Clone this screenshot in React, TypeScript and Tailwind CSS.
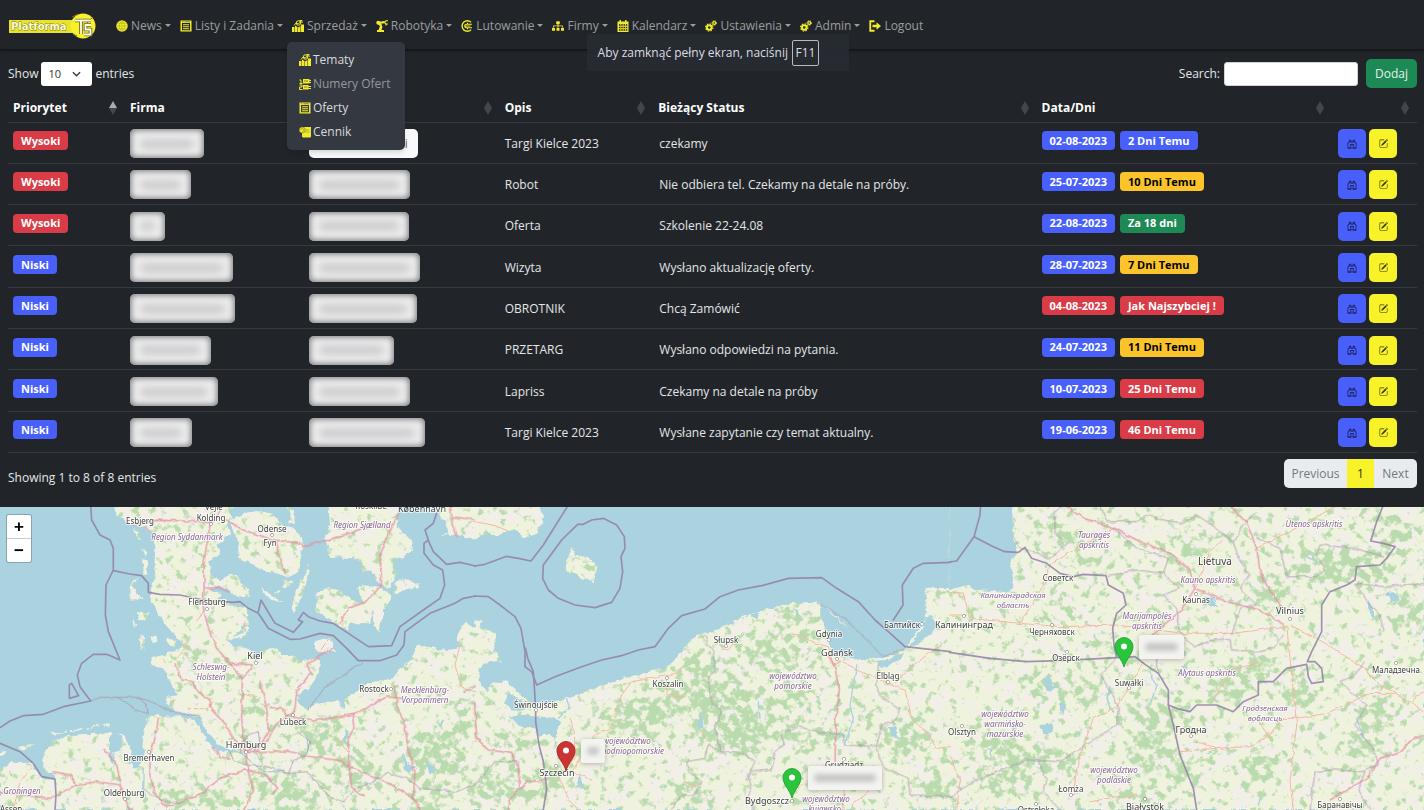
import type { ReactNode } from "react";
import { BsBinoculars, BsPencilSquare } from "react-icons/bs";
import { FaSitemap } from "react-icons/fa";

/* ---------- icons ---------- */

type IconProps = { className?: string };

function NewsIcon({ className }: IconProps) {
  return (
    <svg viewBox="0 0 24 24" className={className} aria-hidden="true">
      <circle cx="12" cy="12" r="11.500" fill="currentColor" />
      <path d="M12 1v22M1 12h22M3 6.500h18M3 17.500h18M12 1c-7 6-7 16 0 22M12 1c7 6 7 16 0 22" fill="none" stroke="#a9a426" strokeWidth="1" />
    </svg>
  );
}

function ListIcon({ className }: IconProps) {
  return (
    <svg viewBox="0 0 24 24" className={className} aria-hidden="true">
      <path fill="currentColor" fillRule="evenodd" d="M1 1h22v22H1zM4 6v14.500h16V6z" />
      <path stroke="currentColor" strokeWidth="2.200" d="M6 9.500h12M6 13.500h12M6 17.500h12" />
      <path stroke="#212529" strokeWidth="1" d="M4 3.500h3M9 3.500h11" />
    </svg>
  );
}

function SalesIcon({ className }: IconProps) {
  return (
    <svg viewBox="0 0 24 24" className={className} aria-hidden="true">
      <path fill="currentColor" d="M0 14h5v10H0zM6 11l5 3v10H6zM12 15l5-3v12h-5zM18 9h6v15h-6z" />
      <circle cx="13" cy="6" r="4.500" fill="none" stroke="currentColor" strokeWidth="2" />
      <path d="M4 11l4-5 5 2 6-7M15 1h5v5" fill="none" stroke="currentColor" strokeWidth="2" />
    </svg>
  );
}

function RobotIcon({ className }: IconProps) {
  return (
    <svg viewBox="0 0 24 24" className={className} aria-hidden="true">
      <path fill="currentColor" d="M2 24v-4h3l3-8-4-3.500h5l4 5L11 20h5v4z" />
      <circle cx="4.500" cy="5.500" r="4" fill="currentColor" />
      <path d="M5 5.500l6 6" stroke="currentColor" strokeWidth="4" />
      <path fill="currentColor" d="M6 3.500L17 2v4.500L6 8z" />
      <path d="M24 1.500h-4l-3 3 3 3.500v3M20 8h4" fill="none" stroke="currentColor" strokeWidth="2.400" />
    </svg>
  );
}

function CalendarIcon({ className }: IconProps) {
  return (
    <svg viewBox="0 0 24 24" className={className} aria-hidden="true">
      <path fill="currentColor" d="M5 0h3v3h8V0h3v3h4v21H1V3h4z" />
      <path fill="#212529" d="M4 8.500h3v3H4zM8.500 8.500h3v3h-3zM13 8.500h3v3h-3zM17.500 8.500h3v3h-3zM4 13.500h3v3H4zM8.500 13.500h3v3h-3zM13 13.500h3v3h-3zM17.500 13.500h3v3h-3zM4 18.500h3v3H4zM8.500 18.500h3v3h-3zM13 18.500h3v3h-3zM17.500 18.500h3v3h-3z" />
    </svg>
  );
}

function GearsIcon({ className }: IconProps) {
  return (
    <svg viewBox="0 0 24 24" className={className} aria-hidden="true">
      <circle cx="8.500" cy="15" r="4.600" fill="none" stroke="currentColor" strokeWidth="4" />
      <circle cx="8.500" cy="15" r="7.300" fill="none" stroke="currentColor" strokeWidth="2.400" strokeDasharray="3 2.730" />
      <circle cx="18.500" cy="6" r="2.800" fill="none" stroke="currentColor" strokeWidth="2.600" />
      <circle cx="18.500" cy="6" r="4.600" fill="none" stroke="currentColor" strokeWidth="1.800" strokeDasharray="2.200 1.930" />
    </svg>
  );
}

function NumbersIcon({ className }: IconProps) {
  return (
    <svg viewBox="0 0 24 24" className={className} aria-hidden="true">
      <path fill="currentColor" d="M8 2h13v9H8zM8 14h11v9H8z" />
      <path d="M1 4h3v7M1 11h6M1 14h5v4H1v5h6M20 5h4M20 9h4M18 17h6M18 21h6" fill="none" stroke="currentColor" strokeWidth="2" />
      <path d="M10 6h8M10 18h7" stroke="#3a3d33" strokeWidth="1.200" />
    </svg>
  );
}

function PriceIcon({ className }: IconProps) {
  return (
    <svg viewBox="0 0 24 24" className={className} aria-hidden="true">
      <path fill="currentColor" d="M9 2h15v18c0 2-1 3-3 3H9c-2 0-3-1-3-3v-6z" />
      <circle cx="6.500" cy="8" r="6" fill="currentColor" stroke="#6a6824" strokeWidth="1.200" />
      <path d="M3.500 8a3 3 0 1 1 3 3M13 8h8M13 12h8" fill="none" stroke="#8a8722" strokeWidth="1.200" />
    </svg>
  );
}

function SolderIcon({ className }: IconProps) {
  return (
    <svg viewBox="0 0 24 24" className={className} aria-hidden="true">
      <path d="M20 4.500A10.500 10.500 0 1 0 20 19.500" fill="none" stroke="currentColor" strokeWidth="2.800" />
      <path d="M22 8.500H11a3.500 3.500 0 0 0 0 7h11M8 12h11M13 5.500v3M13 15.500v3" fill="none" stroke="currentColor" strokeWidth="2.400" />
    </svg>
  );
}

function LogoutIcon({ className }: IconProps) {
  return (
    <svg viewBox="0 0 24 24" className={className} aria-hidden="true">
      <path d="M11 2.500H2.500v19H11" fill="none" stroke="currentColor" strokeWidth="3.600" />
      <path fill="currentColor" d="M7 9.500h8V4.500l9 7.500-9 7.500v-5H7z" />
    </svg>
  );
}

function Logo() {
  return (
    <svg viewBox="0 0 88 26" className="h-[26px] w-[88px]" role="img" aria-label="Platforma TS">
      <rect x="0" y="7" width="66" height="13" fill="#e9e32c" />
      <circle cx="74" cy="13" r="12.500" fill="#f7f02b" />
      <text x="2" y="17" fontSize="10" fontWeight="700" fontFamily="DejaVu Sans, sans-serif" fill="#fbfad2" stroke="#77741f" strokeWidth="0.800" paintOrder="stroke">
        Platforma
      </text>
      <path d="M63 4l6-3M84 4l-6 6M64 21l4 2" stroke="#77741f" strokeWidth="1" />
      <path d="M66 7.500h16M72 8v13M82 12h-5.500v4.500h5v5H75" fill="none" stroke="#6b681f" strokeWidth="3.600" />
      <path d="M66 7.500h16M72 8v13M82 12h-5.500v4.500h5v5H75" fill="none" stroke="#fffef0" strokeWidth="1.800" />
    </svg>
  );
}

/* ---------- navigation ---------- */

const ICON = "size-3 shrink-0 text-[#f2eb2d]";

const NAV: { label: string; icon: ReactNode; caret: boolean }[] = [
  { label: "News", icon: <NewsIcon className={ICON} />, caret: true },
  { label: "Listy i Zadania", icon: <ListIcon className={ICON} />, caret: true },
  { label: "Sprzedaż", icon: <SalesIcon className={ICON} />, caret: true },
  { label: "Robotyka", icon: <RobotIcon className={ICON} />, caret: true },
  { label: "Lutowanie", icon: <SolderIcon className={ICON} />, caret: true },
  { label: "Firmy", icon: <FaSitemap className={ICON} />, caret: true },
  { label: "Kalendarz", icon: <CalendarIcon className={ICON} />, caret: true },
  { label: "Ustawienia", icon: <GearsIcon className={ICON} />, caret: true },
  { label: "Admin", icon: <GearsIcon className={ICON} />, caret: true },
  { label: "Logout", icon: <LogoutIcon className={ICON} />, caret: false },
];

const SALES_MENU: { label: string; icon: ReactNode; active: boolean }[] = [
  { label: "Tematy", icon: <SalesIcon className={ICON} />, active: true },
  { label: "Numery Ofert", icon: <NumbersIcon className={ICON} />, active: false },
  { label: "Oferty", icon: <ListIcon className={ICON} />, active: true },
  { label: "Cennik", icon: <PriceIcon className={ICON} />, active: true },
];

function SalesMenu() {
  return (
    <ul className="absolute -left-[5px] top-[26px] z-20 w-[118px] rounded-[5px] bg-[#343840] py-1.5 shadow-md">
      {SALES_MENU.map((m) => (
        <li key={m.label}>
          <a href="#" className={`flex h-6 items-center gap-0.5 pl-3 whitespace-nowrap ${m.active ? "text-[#d9dbde]" : "text-[#95989d]"}`}>
            {m.icon}
            {m.label}
          </a>
        </li>
      ))}
    </ul>
  );
}

function NavBar() {
  return (
    <header className="relative z-10 flex h-[49px] items-center gap-[19px] pt-0.5 pl-[9px] shadow-[0_1px_3px_#0b0d0f]">
      <a href="#"><Logo /></a>
      <nav>
        <ul className="flex items-center gap-[9px]">
          {NAV.map((n) => (
            <li key={n.label} className="relative">
              <button type="button" className="flex h-5 items-center gap-[3px] whitespace-nowrap text-[#9b9d9f]">
                {n.icon}
                {n.label}
                {n.caret && <span className="size-0 border-x-3 border-t-3 border-x-transparent border-t-current" />}
              </button>
              {n.label === "Sprzedaż" && <SalesMenu />}
            </li>
          ))}
        </ul>
      </nav>
    </header>
  );
}

/* ---------- table ---------- */

const COLUMNS = [
  { title: "Priorytet", width: "w-[8.3%]", sorted: true },
  { title: "Firma", width: "w-[12.7%]", sorted: false },
  { title: "", width: "w-[13.9%]", sorted: false },
  { title: "Opis", width: "w-[10.9%]", sorted: false },
  { title: "Bieżący Status", width: "w-[27.2%]", sorted: false },
  { title: "Data/Dni", width: "w-[21%]", sorted: false },
  { title: "", width: "w-[6%]", sorted: false },
];

const TONES = {
  red: "bg-[#d93c47] text-white",
  blue: "bg-[#485ffa] text-white",
  amber: "bg-[#fac42a] text-black",
  green: "bg-[#1d8a55] text-white",
};
type Tone = keyof typeof TONES;

type Row = {
  high: boolean;
  company: number;
  person: number;
  subject: string;
  status: string;
  date: string;
  dateTone: Tone;
  days: string;
  daysTone: Tone;
};

const ROWS: Row[] = [
  { high: true, company: 74, person: 109, subject: "Targi Kielce 2023", status: "czekamy", date: "02-08-2023", dateTone: "blue", days: "2 Dni Temu", daysTone: "blue" },
  { high: true, company: 61, person: 101, subject: "Robot", status: "Nie odbiera tel. Czekamy na detale na próby.", date: "25-07-2023", dateTone: "blue", days: "10 Dni Temu", daysTone: "amber" },
  { high: true, company: 35, person: 100, subject: "Oferta", status: "Szkolenie 22-24.08", date: "22-08-2023", dateTone: "blue", days: "Za 18 dni", daysTone: "green" },
  { high: false, company: 103, person: 111, subject: "Wizyta", status: "Wysłano aktualizację oferty.", date: "28-07-2023", dateTone: "blue", days: "7 Dni Temu", daysTone: "amber" },
  { high: false, company: 105, person: 108, subject: "OBROTNIK", status: "Chcą Zamówić", date: "04-08-2023", dateTone: "red", days: "Jak Najszybciej !", daysTone: "red" },
  { high: false, company: 81, person: 85, subject: "PRZETARG", status: "Wysłano odpowiedzi na pytania.", date: "24-07-2023", dateTone: "blue", days: "11 Dni Temu", daysTone: "amber" },
  { high: false, company: 88, person: 101, subject: "Lapriss", status: "Czekamy na detale na próby", date: "10-07-2023", dateTone: "blue", days: "25 Dni Temu", daysTone: "red" },
  { high: false, company: 62, person: 116, subject: "Targi Kielce 2023", status: "Wysłane zapytanie czy temat aktualny.", date: "19-06-2023", dateTone: "blue", days: "46 Dni Temu", daysTone: "red" },
];

function Badge({ tone, children }: { tone: Tone; children: ReactNode }) {
  return <span className={`inline-flex h-[19px] items-center rounded-[4px] px-2 text-[11px] font-bold whitespace-nowrap ${TONES[tone]}`}>{children}</span>;
}

function HiddenName({ width, label, plain }: { width: number; label: string; plain?: boolean }) {
  return (
    <button
      type="button"
      aria-label={label}
      style={{ width }}
      className={`flex h-[29px] items-center rounded-[5px] px-2.5 ${plain ? "justify-end bg-[#f8f9fa] text-[#6b6480]" : "bg-[#eeeeef] shadow-[inset_0_0_6px_1px_#6f7174]"}`}
    >
      {plain ? "i" : <span className="h-2 w-full rounded-full bg-[#c4c4c6] blur-[4px]" />}
    </button>
  );
}

function SortMark({ sorted }: { sorted: boolean }) {
  return (
    <svg viewBox="0 0 8 14" className="h-3.5 w-2" aria-hidden="true">
      <path d="M4 0l4 7H0z" fill={sorted ? "#a9acaf" : "#43474b"} />
      <path d="M4 14l4-7H0z" fill="#43474b" />
    </svg>
  );
}

function TopicsTable() {
  return (
    <table className="mt-1 h-[361px] w-full table-fixed border-collapse">
      <thead>
        <tr className="h-[30px] border-b border-[#373b3e]">
          {COLUMNS.map((c, i) => (
            <th key={i} scope="col" className={`px-[5px] pt-0.5 text-left font-bold text-white ${c.width}`}>
              <span className="flex items-center justify-between pr-[3px]">
                <span>{c.title}</span>
                <SortMark sorted={c.sorted} />
              </span>
            </th>
          ))}
        </tr>
      </thead>
      <tbody>
        {ROWS.map((r, i) => (
          <tr key={i} className="border-b border-[#373b3e] text-[#e4e6e8]">
            <td className="px-[5px] pb-1">
              <Badge tone={r.high ? "red" : "blue"}>{r.high ? "Wysoki" : "Niski"}</Badge>
            </td>
            <td className="px-[5px] pt-0.5"><HiddenName width={r.company} label="Firma" /></td>
            <td className="px-[5px] pt-0.5"><HiddenName width={r.person} label="Osoba" plain={i === 0} /></td>
            <td className="px-[5px] pt-0.5">{r.subject}</td>
            <td className="px-1.5 pt-0.5">{r.status}</td>
            <td className="px-[5px] pb-1">
              <span className="flex gap-[5px]">
                <Badge tone={r.dateTone}>{r.date}</Badge>
                <Badge tone={r.daysTone}>{r.days}</Badge>
              </span>
            </td>
            <td className="px-1.5 pt-0.5">
              <span className="flex gap-[3px]">
                <button type="button" aria-label="Podgląd" className="grid h-[29px] w-7 place-items-center rounded-[5px] bg-[#485ffa] text-[#0c1033]">
                  <BsBinoculars className="size-2.5" />
                </button>
                <button type="button" aria-label="Edytuj" className="grid h-[29px] w-7 place-items-center rounded-[5px] bg-[#f8f229] text-[#33320c]">
                  <BsPencilSquare className="size-[9px]" />
                </button>
              </span>
            </td>
          </tr>
        ))}
      </tbody>
    </table>
  );
}

function Toolbar() {
  return (
    <div className="flex items-center justify-between">
      <label className="flex items-center gap-[3px]">
        Show
        <span className="relative flex">
          <select defaultValue="10" className="h-6 w-[51px] appearance-none rounded-[3px] bg-white pl-[7px] text-[11px] text-[#333]">
            <option>10</option>
            <option>25</option>
            <option>50</option>
          </select>
          <svg viewBox="0 0 10 6" className="pointer-events-none absolute right-[11px] top-[9px] h-1.5 w-[9px]" aria-hidden="true">
            <path d="M1 1l4 4 4-4" fill="none" stroke="#343a40" strokeWidth="1.500" />
          </svg>
        </span>
        entries
      </label>
      <div className="flex items-center gap-2">
        <label className="flex items-center gap-1">
          Search:
          <input type="search" className="h-6 w-[134px] rounded-[3px] border border-[#ced4da] bg-white px-2 text-black" />
        </label>
        <button type="button" className="h-[29px] w-[51px] rounded-[5px] bg-[#1d8a55] text-[#e5f1ea]">Dodaj</button>
      </div>
    </div>
  );
}

function TableFooter() {
  return (
    <div className="flex justify-between pt-1.5 pb-[19px]">
      <p className="pt-[11px]">Showing 1 to 8 of 8 entries</p>
      <nav aria-label="Strony" className="flex h-[29px] overflow-hidden rounded-[5px] bg-[#e9ecef] text-[#73787d]">
        <button type="button" disabled className="w-[63px]">Previous</button>
        <button type="button" aria-current="page" className="w-[27px] bg-[#f8f229] text-[#33320c]">1</button>
        <button type="button" disabled className="w-[43px]">Next</button>
      </nav>
    </div>
  );
}

/* ---------- map ---------- */

type Tile = {
  land: string[];
  water: string[];
  rivers: string[];
  borders: string[];
  regions: string[];
  motorways: string[];
  roads: string[];
  forest: [number, number, number, number][];
};

const TILES: Tile[] = [
  {
    land: [
      "345,0 350,35 385,50 400,62 440,62 455,80 462,130 468,180 462,225 455,255 452,290 470,315 490,350 510,375 530,395 545,420 535,435 500,440 490,450 450,460 455,480 475,490 498,497 500,520 520,545 530,570 500,580 505,600 525,620 570,626 600,640 625,685 650,715 690,734 690,742 650,735 620,708 598,662 570,636 520,634 490,635 465,628 445,640 432,680 428,715 435,745 425,770 400,790 390,760 395,735 375,700 362,680 365,720 358,740 340,745 345,780 330,760 330,700 335,685 240,688 180,700 150,720 130,745 130,790 165,815 165,825 130,822 112,805 98,775 50,770 0,785 0,915 1427,915 1427,375 1400,350 1380,375 1370,400 1380,430 1340,435 1250,420 1245,440 1230,470 1200,490 1180,520 1100,535 1070,560 1040,580 1030,610 1010,590 980,590 940,600 920,615 895,590 895,570 930,545 955,510 960,480 955,460 900,470 880,450 850,450 830,430 800,430 780,450 765,465 760,440 740,430 710,425 690,415 680,400 735,400 745,380 740,310 690,300 680,285 650,285 670,265 640,260 625,245 625,225 645,215 630,200 625,170 640,160 660,145 650,115 670,110 690,85 680,55 700,40 690,20 700,0",
      "945,405 990,400 1005,440 965,445 945,430",
      "690,50 720,30 770,15 815,25 850,60 885,70 905,100 905,150 895,200 860,215 830,210 790,195 745,170 715,155 715,110 700,80",
      "860,0 885,30 888,60 865,55 870,30",
      "625,215 665,225 690,205 715,215 745,260 750,278 720,275 690,260 655,245 630,250",
      "930,175 920,225 905,270 885,325 875,310 885,270 905,225",
      "785,250 845,290 825,293 790,265",
      "850,225 880,225 870,245 850,245",
      "985,0 990,60 975,95 990,155 1060,160 1080,165 1090,200 1120,200 1140,235 1165,250 1190,215 1180,165 1195,160 1240,135 1235,105 1210,85 1190,60 1195,20 1205,0",
      "1185,230 1210,220 1255,235 1258,250 1215,255 1180,270",
      "950,260 985,248 1050,275 1060,290 1100,290 1120,315 1110,355 1050,355 1040,375 1000,350 975,335 945,315 950,290",
      "1070,250 1095,240 1145,250 1175,275 1150,320 1138,385 1125,370 1120,320 1085,280",
      "1300,0 1340,60 1345,85 1320,92 1370,90 1427,102 1427,0",
      "398,68 414,75 425,108 416,105",
      "425,130 442,140 436,152",
      "430,163 443,165 441,205 428,207",
      "412,215 403,245 415,270 435,280 390,285 392,245",
      "412,325 445,322 445,345 420,343",
      "395,340 410,365 402,368",
      "452,395 470,392 472,410 455,415",
      "500,402 530,405 525,425 500,420",
      "424,385 432,400 430,435 424,430",
      "155,683 200,678 200,683 155,690",
      "210,676 250,668 250,673 210,681",
      "260,667 300,659 300,664 260,671",
      "310,660 330,658 330,668 312,665",
      "55,725 105,718 90,730 60,734",
      "0,742 20,738 15,748 0,750",
      "820,260 840,256 838,270",
    ],
    water: ["1035,670 1045,680 1040,720 1030,710", "1205,740 1225,780 1250,790 1215,800", "1275,765 1310,790 1290,810", "1315,655 1335,640 1320,670", "735,350 730,380 695,400 725,370"],
    rivers: ["430,790 428,850 435,880", "690,738 720,742 790,800 860,800", "920,690 925,740 910,760"],
    borders: [
      "272,0 275,45 300,90 330,105 340,130 340,195 318,240 316,330 325,380 360,465 320,448 280,448 245,475 232,510 240,545 272,588 190,605 130,628 70,632 30,648 0,668",
      "340,197 390,207 425,212 445,235 445,262 480,268 540,270 610,285 700,292 720,290 745,310 775,325 805,370 870,403 900,402 960,385 1000,392 1040,430 1075,467 1140,467 1190,450 1212,420 1215,380 1290,325 1365,295 1390,280 1427,273",
      "775,320 783,285 825,355 880,382 908,350 895,345 910,322 925,335 960,348 1000,355 1105,425 1175,422 1200,365 1270,315 1320,280 1334,240 1328,195 1300,180 1272,145 1272,115 1285,105 1275,75 1300,55 1310,25",
      "1285,107 1300,140 1340,178 1380,172 1427,183",
      "208,580 208,540 215,535 236,572 208,580",
      "0,715 60,740 100,775 125,815 165,822 168,870 165,915",
    ],
    regions: [
      "272,588 300,577 410,577 440,585 490,605 530,625 600,632",
      "350,577 420,620 445,625 440,600 415,577",
      "925,615 970,550 1085,475",
      "690,740 700,765 740,780 800,785 865,805 880,770 920,745 930,710 895,680",
      "720,745 725,710 745,690 775,680 780,720 760,740 790,770",
      "865,805 920,800 950,830 985,875 1030,890 1070,850 1130,825 1160,805 1220,820 1260,850 1370,860 1427,835",
      "430,855 460,870 490,885 540,895",
      "1427,545 1390,560",
    ],
    motorways: [
      "655,0 660,20 630,60 620,120 612,170 612,250 610,310 625,370 650,430 690,475 727,520 725,640 735,740 745,800 760,860 730,915",
      "400,60 470,46 560,48 630,52",
      "680,45 730,75 820,105 905,115 910,125 1000,100 1060,80 1120,60 1170,70",
      "830,110 835,150 855,205",
      "1200,15 1170,80 1140,150 1145,240 1100,290 1045,310 1020,355",
      "612,250 655,248 690,262",
      "1350,0 1360,60 1372,95",
      "1355,35 1425,45",
      "690,475 760,480 730,520",
      "525,475 545,525 580,530 595,560 630,585 635,615 680,660 700,700 735,740",
      "735,740 800,710 830,655 870,630 885,610 890,560 930,505 920,480 960,450 1000,430",
      "780,530 800,610 805,680 770,740",
      "740,740 860,738 930,755 1010,765 1060,790 1160,830 1240,880 1260,915",
      "870,635 940,648 1060,628 1110,605 1160,575 1205,580",
      "1185,540 1190,600 1215,660 1225,740 1245,800 1240,880",
      "1060,628 1065,670 1045,700 1045,760 1055,850 1090,875",
      "475,640 465,700 450,750 450,810 465,865 500,905 600,870 660,820 735,795 800,810 830,850 820,865",
      "160,800 210,810 228,840 290,830 360,840 380,900 400,915",
      "310,730 350,780 370,870",
      "0,860 150,880 180,865 228,840",
      "640,730 660,755 690,762",
      "810,610 850,612 860,635",
    ],
    roads: ["430,65 470,90 470,110", "565,610 620,612 640,590", "735,350 735,380", "725,570 780,575", "100,780 60,830 40,915", "990,405 960,435", "1380,420 1365,480 1385,550 1427,560", "545,405 560,430 530,455", "1015,700 1040,740", "610,320 590,350"],
    forest: [[540, 445, 70, 22], [760, 600, 40, 25], [640, 880, 60, 40], [820, 840, 80, 40], [1060, 800, 70, 60], [1300, 760, 100, 80], [1290, 890, 60, 40], [960, 690, 60, 60], [1300, 430, 50, 12], [530, 880, 40, 40], [900, 880, 90, 40], [1390, 650, 40, 60]],
  },
  {
    land: [
      "-2,0 190,0 207,35 190,80 160,95 140,92 120,75 70,90 20,90 -2,104",
      "290,125 300,150 330,155 370,185 358,235 335,225 275,198 278,150",
      "-2,345 20,350 15,370 60,380 65,400 55,430 80,470 75,490 45,500 30,545 60,530 95,530 110,545 150,580 185,605 210,600 240,590 330,560 430,525 520,500 570,490 600,465 640,410 665,390 720,380 755,355 830,325 940,295 1025,290 1040,310 1035,330 1050,370 1065,390 1060,420 1080,450 1110,460 1170,465 1205,468 1215,490 1280,462 1290,440 1310,430 1370,385 1385,365 1370,330 1350,335 1355,300 1350,255 1360,248 1427,250 1427,915 -2,915",
      "1025,290 1090,338 1120,372 1085,338",
      "1110,460 1180,463 1240,455 1290,430 1340,365 1350,330 1345,365 1295,438 1240,464 1180,470",
    ],
    water: [
      "100,630 160,630 240,635 258,655 240,700 225,690 190,690 175,670 130,660",
      "10,490 40,470 75,465 90,500 50,530 40,556 15,545",
      "95,560 140,585 150,615 110,620 90,590",
      "755,350 775,345 775,360 760,362",
      "825,325 855,322 845,345",
      "310,810 322,820 318,855 308,840",
      "670,640 680,620 688,660 670,670",
      "1240,660 1260,670 1275,700 1250,690",
      "955,310 968,315 965,335",
    ],
    rivers: ["1145,480 1135,540 1125,600 1135,640 1110,720", "275,580 285,610 250,640", "710,460 720,500", "240,700 250,760", "850,590 855,640", "1080,700 1110,690"],
    borders: [
      "280,0 205,120 168,168 130,160 95,154 30,178 -2,183",
      "308,58 260,105 205,180 203,220 220,255 250,280 300,300 360,308 410,292 435,250 443,200 438,155 450,130 448,95 425,60 385,40 350,45 325,58 308,58",
      "-2,273 40,275 75,300 120,335 138,370 150,440 150,485 170,500 185,540 240,515 320,485 380,465 440,452 490,435 540,425 580,370 620,332 690,312 735,275 790,255 860,242 940,220 1040,218 1085,250 1150,290 1200,345 1240,380 1290,425 1427,440",
      "152,430 158,460 175,500 182,610 182,650 192,720 205,770 215,850 205,915",
      "1427,172 1345,175 1315,190 1282,240 1284,300 1255,345",
    ],
    regions: [
      "690,390 700,420 715,440 718,490 700,520 708,590 740,620 720,660 735,740 800,745 840,770 820,810 830,850 815,880 840,915",
      "735,740 700,715 690,760 635,770 640,800 680,830 660,870 620,870 590,915",
      "815,830 830,800 890,795 900,740 925,720 920,690 970,665 1030,680 1105,690 1110,720 1205,725 1220,660 1260,650 1275,610 1215,575 1205,540 1210,480",
      "1205,725 1210,760 1230,790 1300,820 1305,870 1427,875",
      "0,840 60,770 130,770 130,800",
      "1040,300 1120,350 1225,455 1290,430",
    ],
    motorways: ["-2,590 5,700 40,735 110,745 135,800 130,850 105,890 100,915", "1060,450 1080,490 1093,550 1082,640 1080,780", "135,850 160,830 215,825", "1105,840 1105,915"],
    roads: ["0,50 60,62 100,78", "285,640 298,680 300,760 270,800", "290,800 360,690 405,670 440,570 470,530 560,515 620,500", "575,520 575,565 600,575 640,575", "945,388 980,390 1010,412 1060,425 1075,480 1100,470 1170,505 1240,535 1290,555 1310,640 1365,695 1385,730 1427,725", "1260,535 1320,475 1400,420", "240,790 280,880 310,915", "740,430 760,435 775,420", "960,860 1000,825 1060,790", "1190,850 1130,900", "290,800 350,825", "680,680 695,700", "630,830 660,845"],
    forest: [[700, 560, 110, 80], [790, 590, 100, 50], [880, 440, 100, 50], [960, 330, 90, 24], [480, 640, 120, 50], [130, 705, 80, 24], [60, 850, 80, 50], [240, 810, 40, 50], [780, 680, 130, 70], [1000, 690, 130, 30], [1300, 700, 90, 50], [1380, 850, 50, 50], [650, 860, 60, 40], [570, 590, 80, 50], [960, 580, 50, 50], [1160, 620, 30, 30], [1000, 410, 40, 50], [320, 190, 30, 14], [180, 860, 40, 40], [660, 460, 30, 30]],
  },
  {
    land: ["-2,-4 1424,-4 1424,915 -2,915"],
    water: [
      "-2,-4 185,-4 190,80 200,140 185,170 190,245 175,262 80,255 50,240 -2,255",
      "1305,265 1330,262 1350,285 1325,295",
      "270,660 310,655 305,680 280,685",
      "760,275 800,285 805,310 780,300",
      "690,480 710,485 705,500",
      "280,520 300,515 305,540 330,545 300,560",
      "490,430 505,435 500,470",
      "1255,285 1275,320 1275,345 1250,310",
      "330,590 345,600 340,630",
      "120,730 130,735 125,760",
    ],
    rivers: ["770,745 790,735", "480,545 470,590 490,620", "600,500 620,540 600,600", "1060,150 1100,170", "1220,640 1240,700", "930,880 925,900"],
    borders: [
      "92,-4 90,30 72,95 20,168 -2,171",
      "72,95 130,125 165,140 205,142 225,127 245,160 290,175 330,205 370,215 400,208 468,212 475,240 520,265 528,300 500,325 488,370 492,420 500,455",
      "-2,442 120,460 230,470 350,466 500,458 555,455 585,478 625,505 655,555 655,600 680,610 720,620 740,600 800,600 850,620 880,590 925,570 925,530 970,530 1010,490 1070,478 1075,515 1085,535 1120,530 1115,490 1095,470 1072,470 1085,440 1115,380 1115,300 1140,260 1190,240 1215,225 1220,185 1290,180 1310,160 1335,125 1300,115 1262,108 1280,50 1300,0",
      "655,600 670,660 690,750 730,850 740,915",
    ],
    regions: [
      "190,100 215,130 300,160 350,115 315,85 315,20 340,0",
      "450,0 470,50 560,50 600,30 640,45 700,55 740,30 800,70 850,110 880,60 920,20",
      "475,212 560,195 640,205 655,160 560,130 490,70",
      "640,205 690,250 640,270 680,310 690,380 730,425 790,405 840,400 845,435 930,440 970,430 1000,390",
      "850,110 865,160 900,210 870,250 920,300 870,310 845,390",
      "920,100 990,130 1010,215 1100,215 1125,190 1100,150 1110,120 1215,130 1300,155",
      "1215,235 1260,300 1290,330 1300,380",
      "500,460 450,510 480,560 505,605 500,660 440,700 330,770 230,765 170,790 70,830 40,850 0,880",
      "265,765 290,830 280,860 330,915",
      "1080,915 1095,800 1150,795 1240,800 1285,780 1275,740 1215,660 1250,600 1170,530 1215,510 1240,470",
      "1245,800 1225,850 1260,915",
      "620,460 620,490 625,505",
      "1215,235 1300,245 1424,235",
    ],
    motorways: ["340,0 400,40 490,68 560,105 670,150 720,200 735,250 830,290 930,315 1000,358", "840,0 890,55 920,130 930,200 960,260 1000,310", "735,250 690,320 640,360 600,400", "1140,885 1250,820 1290,760 1350,740 1390,700 1424,695"],
    roads: ["0,260 40,265 60,340 210,355 330,365 500,360 700,385 850,385 1000,365", "50,330 0,330", "210,355 280,240 300,180 380,130 490,68", "580,470 530,560 500,605 430,640 405,710 380,790 370,870", "690,740 740,735 800,730 900,725 960,690 1000,640 1040,640 1130,625 1260,565 1330,565 1390,595 1424,625", "1020,360 1100,400 1150,430 1240,490 1290,540 1340,565", "1010,360 1040,660 1030,740 1020,830 1030,915", "0,750 30,830 20,915", "780,600 840,500 930,470", "740,710 820,735", "420,890 500,875 560,870", "920,130 1060,60 1160,0", "735,250 780,140 840,80", "1390,590 1400,570 1424,560", "960,700 920,640"],
    forest: [[430, 180, 60, 22], [360, 100, 60, 30], [640, 620, 100, 40], [840, 540, 80, 50], [280, 760, 130, 40], [130, 720, 80, 40], [160, 830, 90, 40], [400, 560, 50, 40], [1180, 190, 160, 60], [1340, 80, 70, 50], [1290, 620, 70, 50], [1240, 720, 50, 60], [600, 730, 60, 80], [1050, 560, 50, 50], [920, 490, 80, 40], [1380, 330, 50, 60], [720, 130, 60, 40], [960, 260, 60, 50], [480, 440, 70, 16], [560, 880, 90, 30], [280, 60, 40, 30], [700, 800, 40, 60], [340, 320, 60, 14], [280, 540, 60, 40], [930, 780, 60, 50]],
  },
];

type Label = { x: number; y: number; size: number; lines: string[]; region?: boolean; dot?: [number, number] };

const LABELS: Label[] = [
  { x: 214, y: 3, size: 8, lines: ["Vejle"] },
  { x: 140, y: 17, size: 8, lines: ["Esbjerg"] },
  { x: 211, y: 14, size: 8, lines: ["Kolding"], dot: [211, 17] },
  { x: 272, y: 25, size: 8, lines: ["Odense"], dot: [272, 28] },
  { x: 270, y: 39, size: 8, lines: ["Fyn"] },
  { x: 371, y: 2, size: 8, lines: ["Roskilde"] },
  { x: 422, y: 5, size: 9, lines: ["København"] },
  { x: 187, y: 33, size: 8, lines: ["Region Syddanmark"], region: true },
  { x: 362, y: 21, size: 8, lines: ["Region Sjælland"], region: true },
  { x: 207, y: 98, size: 8, lines: ["Flensburg"], dot: [207, 102] },
  { x: 255, y: 152, size: 9, lines: ["Kiel"], dot: [256, 156] },
  { x: 211, y: 163, size: 8, lines: ["Schleswig-", "Holstein"], region: true },
  { x: 293, y: 218, size: 8, lines: ["Lübeck"], dot: [293, 208] },
  { x: 246, y: 241, size: 9, lines: ["Hamburg"], dot: [246, 245] },
  { x: 149, y: 254, size: 8, lines: ["Bremerhaven"], dot: [149, 245] },
  { x: 124, y: 289, size: 8, lines: ["Oldenburg"], dot: [125, 292] },
  { x: 22, y: 287, size: 8, lines: ["Groningen"], region: true },
  { x: 11, y: 305, size: 8, lines: ["Assen"] },
  { x: 374, y: 185, size: 8, lines: ["Rostock"], dot: [391, 182] },
  { x: 425, y: 186, size: 8, lines: ["Mecklenburg-", "Vorpommern"], region: true },
  { x: 536, y: 201, size: 8, lines: ["Świnoujście"], dot: [536, 203] },
  { x: 557, y: 269, size: 9, lines: ["Szczecin"], dot: [556, 259] },
  { x: 627, y: 237, size: 8, lines: ["województwo", "zachodniopomorskie"], region: true },
  { x: 668, y: 180, size: 8, lines: ["Koszalin"], dot: [667, 171] },
  { x: 726, y: 136, size: 8, lines: ["Słupsk"], dot: [726, 139] },
  { x: 793, y: 172, size: 8, lines: ["województwo", "pomorskie"], region: true },
  { x: 829, y: 130, size: 8, lines: ["Gdynia"], dot: [829, 133] },
  { x: 837, y: 149, size: 9, lines: ["Gdańsk"], dot: [837, 152] },
  { x: 888, y: 172, size: 8, lines: ["Elbląg"], dot: [888, 175] },
  { x: 844, y: 261, size: 8, lines: ["Grudziądz"], dot: [844, 252] },
  { x: 767, y: 297, size: 9, lines: ["Bydgoszcz"], dot: [792, 294] },
  { x: 826, y: 295, size: 8, lines: ["województwo", "kujawsko-"], region: true },
  { x: 902, y: 121, size: 8, lines: ["Балтийск"], dot: [922, 117] },
  { x: 964, y: 121, size: 9, lines: ["Калининград"], dot: [964, 109] },
  { x: 1013, y: 91, size: 8, lines: ["Калининградская", "область"], region: true },
  { x: 1058, y: 74, size: 8, lines: ["Советск"] },
  { x: 1052, y: 128, size: 8, lines: ["Черняховск"], dot: [1052, 118] },
  { x: 1066, y: 154, size: 8, lines: ["Озёрск"], dot: [1067, 145] },
  { x: 1094, y: 31, size: 8, lines: ["Tauragės", "apskritis"], region: true },
  { x: 1215, y: 58, size: 10, lines: ["Lietuva"] },
  { x: 1208, y: 76, size: 8, lines: ["Kauno apskritis"], region: true },
  { x: 1196, y: 96, size: 8, lines: ["Kaunas"], dot: [1196, 87] },
  { x: 1147, y: 112, size: 8, lines: ["Marijampolės", "apskritis"], region: true },
  { x: 1314, y: 20, size: 8, lines: ["Utenos apskritis"], region: true },
  { x: 1290, y: 107, size: 9, lines: ["Vilnius"], dot: [1290, 112] },
  { x: 1207, y: 169, size: 8, lines: ["Alytaus apskritis"], region: true },
  { x: 1129, y: 179, size: 8, lines: ["Suwałki"], dot: [1129, 181] },
  { x: 1265, y: 204, size: 8, lines: ["Гродзенская", "вобласць"], region: true },
  { x: 1191, y: 226, size: 9, lines: ["Гродна"], dot: [1191, 229] },
  { x: 1396, y: 166, size: 8, lines: ["Маладзечна"], dot: [1396, 156] },
  { x: 1005, y: 210, size: 8, lines: ["województwo", "warmińsko-", "mazurskie"], region: true },
  { x: 962, y: 228, size: 8, lines: ["Olsztyn"], dot: [962, 219] },
  { x: 1114, y: 266, size: 8, lines: ["województwo", "podlaskie"], region: true },
  { x: 1071, y: 285, size: 8, lines: ["Łomża"], dot: [1071, 288] },
  { x: 1145, y: 303, size: 9, lines: ["Białystok"], dot: [1145, 292] },
  { x: 1036, y: 306, size: 8, lines: ["Ostrołęka"], dot: [1036, 297] },
  { x: 1340, y: 301, size: 8, lines: ["Баранавічы"], dot: [1340, 292] },
];

const TILE_WIDTH = 475;

function TileLayer({ children }: { children: (tile: Tile) => ReactNode }) {
  return (
    <>
      {TILES.map((tile, i) => (
        <g key={i} transform={`translate(${i * TILE_WIDTH} -2) scale(${1 / 3})`}>{children(tile)}</g>
      ))}
    </>
  );
}

function Lines({ pick, color, width, opacity = 1 }: { pick: (t: Tile) => string[]; color: string; width: number; opacity?: number }) {
  return (
    <g fill="none" stroke={color} strokeWidth={width} strokeLinejoin="round" strokeLinecap="round" opacity={opacity}>
      <TileLayer>{(t) => pick(t).map((p) => <polyline key={p} points={p} />)}</TileLayer>
    </g>
  );
}

function Pin({ x, y, color, edge }: { x: number; y: number; color: string; edge: string }) {
  return (
    <g transform={`translate(${x} ${y})`}>
      <path d="M0 0C-2-8-9-13-9-20.500A9 9 0 0 1 9-20.500C9-13 2-8 0 0z" fill={color} stroke={edge} strokeWidth="0.800" />
      <circle cx="0" cy="-20.500" r="3" fill="#fff" />
    </g>
  );
}

function MapTip({ x, y, width }: { x: number; y: number; width: number }) {
  return (
    <g>
      <rect x={x} y={y + 1} width={width} height="24" rx="2" fill="#000" opacity="0.25" filter="url(#soft)" />
      <rect x={x} y={y} width={width} height="24" rx="2" fill="#f3f3f0" />
      <rect x={x + 6} y={y + 8} width={width - 12} height="8" rx="4" fill="#c6c6c6" filter="url(#soft)" />
    </g>
  );
}

function MapDrawing() {
  return (
    <svg viewBox="0 0 1424 303" preserveAspectRatio="xMinYMin slice" className="absolute inset-0 size-full" role="img" aria-label="Mapa firm">
      <defs>
        <filter id="soft" x="-50%" y="-50%" width="200%" height="200%"><feGaussianBlur stdDeviation="2.500" /></filter>
        <filter id="coast" filterUnits="userSpaceOnUse" x="0" y="0" width="1424" height="303">
          <feTurbulence type="fractalNoise" baseFrequency="0.14" numOctaves="3" seed="4" result="n" />
          <feDisplacementMap in="SourceGraphic" in2="n" scale="6" xChannelSelector="R" yChannelSelector="G" />
        </filter>
        <filter id="wobble" filterUnits="userSpaceOnUse" x="0" y="0" width="1424" height="303">
          <feTurbulence type="fractalNoise" baseFrequency="0.12" numOctaves="2" seed="9" result="n" />
          <feDisplacementMap in="SourceGraphic" in2="n" scale="4" xChannelSelector="R" yChannelSelector="G" />
        </filter>
        <filter id="fields" filterUnits="userSpaceOnUse" x="0" y="0" width="1424" height="303" colorInterpolationFilters="sRGB">
          <feTurbulence type="fractalNoise" baseFrequency="0.06" numOctaves="5" seed="21" />
          <feColorMatrix values="0 0 0 0 0.949  0 0 0 0 0.937  0 0 0 0 0.914  9 0 0 0 -4.400" />
        </filter>
        <filter id="woods" filterUnits="userSpaceOnUse" x="0" y="0" width="1424" height="303" colorInterpolationFilters="sRGB">
          <feGaussianBlur in="SourceGraphic" stdDeviation="7" result="density" />
          <feTurbulence type="fractalNoise" baseFrequency="0.120" numOctaves="5" seed="7" />
          <feColorMatrix values="0 0 0 0 0  0 0 0 0 0  0 0 0 0 0  1 0 0 0 0" result="noise" />
          <feComposite in="density" in2="noise" operator="arithmetic" k2="0.190" k3="1" result="sum" />
          <feColorMatrix in="sum" values="0 0 0 0 0.730  0 0 0 0 0.860  0 0 0 0 0.680  0 0 0 7 -4.050" />
        </filter>
        <mask id="land">
          <g filter="url(#coast)">
            <TileLayer>
              {(t) => (
                <>
                  {t.land.map((p) => <polygon key={p} points={p} fill="#fff" />)}
                  {t.water.map((p) => <polygon key={p} points={p} fill="#000" />)}
                </>
              )}
            </TileLayer>
          </g>
        </mask>
      </defs>

      <rect width="1424" height="303" fill="#abd2df" />
      <g mask="url(#land)">
        <rect width="1424" height="303" fill="#eff2dc" />
        <rect width="1424" height="303" filter="url(#fields)" />
        <g filter="url(#woods)">
          <TileLayer>{(t) => t.forest.map(([cx, cy, rx, ry]) => <ellipse key={`${cx}-${cy}`} cx={cx} cy={cy} rx={rx} ry={ry} fill="#000" />)}</TileLayer>
        </g>
      </g>

      <g filter="url(#wobble)">
        <Lines pick={(t) => t.rivers} color="#abd2df" width={4} />
        <Lines pick={(t) => t.roads} color="#f5b8a0" width={3} />
        <Lines pick={(t) => t.motorways} color="#e58ba0" width={4} opacity={0.9} />
        <Lines pick={(t) => t.regions} color="#a795ab" width={3} opacity={0.8} />
      </g>
      <Lines pick={(t) => t.borders} color="#9282a6" width={5} opacity={0.85} />

      <g fontFamily="'Noto Sans', sans-serif" textAnchor="middle" stroke="#fff" strokeOpacity="0.7" strokeWidth="2" paintOrder="stroke" strokeLinejoin="round">
        {LABELS.map((l, i) => (
          <g key={i}>
            {l.dot && <circle cx={l.dot[0]} cy={l.dot[1]} r="1.500" fill="#fff" stroke="#555" strokeOpacity="1" strokeWidth="0.800" />}
            <text fontSize={l.size} fontStyle={l.region ? "italic" : "normal"} fill={l.region ? "#8a6496" : "#3d3d3d"}>
              {l.lines.map((line, n) => (
                <tspan key={n} x={l.x} y={l.y + n * 10}>{line}</tspan>
              ))}
            </text>
          </g>
        ))}
      </g>

      <MapTip x={1139} y={128} width={45} />
      <MapTip x={581} y={232} width={24} />
      <MapTip x={808} y={259} width={74} />
      <Pin x={1124} y={160} color="#2bc53b" edge="#1a9a2a" />
      <Pin x={566} y={264} color="#cc3333" edge="#9c2020" />
      <Pin x={792} y={291} color="#2bc53b" edge="#1a9a2a" />
    </svg>
  );
}

function MapPanel() {
  return (
    <section className="relative min-h-[303px] flex-1 overflow-hidden bg-[#abd2df]">
      <MapDrawing />
      <div className="absolute left-[7px] top-2 flex w-6 flex-col overflow-hidden rounded-[2px] bg-white font-['Liberation_Sans',sans-serif] text-[17px] leading-none font-bold text-black shadow-[0_0_0_1px_#8aa5b0]">
        <button type="button" aria-label="Przybliż" className="h-6 border-b border-[#ccc]">+</button>
        <button type="button" aria-label="Oddal" className="h-[23px]">−</button>
      </div>
    </section>
  );
}

/* ---------- page ---------- */

function FullscreenHint() {
  return (
    <div role="status" className="absolute left-[587px] top-[34px] z-30 flex h-[37px] w-[262px] items-center justify-end gap-1 bg-[#272a31]/95 pr-[30px] whitespace-nowrap text-[#dcdde0]">
      Aby zamknąć pełny ekran, naciśnij
      <kbd className="grid h-[26px] w-[27px] place-items-center rounded-[2px] border border-[#b9bbc0] font-[inherit]">F11</kbd>
    </div>
  );
}

export default function App() {
  return (
    <div className="relative flex min-h-screen flex-col bg-[#212529] font-['Open_Sans',sans-serif] text-[12px] leading-4 text-[#e4e6e8]">
      <NavBar />
      <FullscreenHint />
      <main className="pt-2.5 pr-[7px] pl-2">
        <Toolbar />
        <TopicsTable />
        <TableFooter />
      </main>
      <MapPanel />
    </div>
  );
}
